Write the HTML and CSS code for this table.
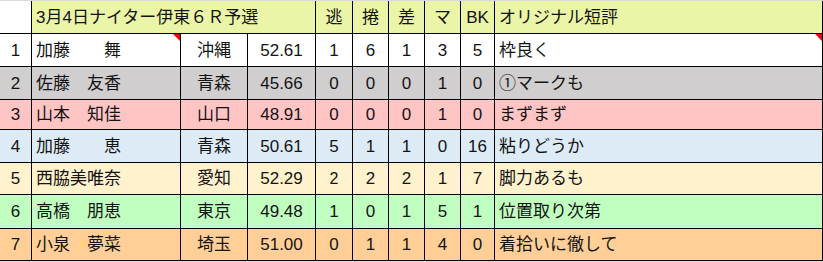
FILE: index.html
```html
<!DOCTYPE html>
<html lang="ja">
<head>
<meta charset="utf-8">
<title>3月4日ナイター伊東６Ｒ予選</title>
<link rel="stylesheet" href="styles.css">
</head>
<body>
<div class="sheet">
  <div class="row head">
    <div class="c idx"></div>
    <div class="c txt span3">3月4日ナイター伊東６Ｒ予選</div>
    <div class="c num">逃</div>
    <div class="c num">捲</div>
    <div class="c num">差</div>
    <div class="c num">マ</div>
    <div class="c num">BK</div>
    <div class="c txt">オリジナル短評</div>
  </div>
  <div class="row r1">
    <div class="c num">1</div>
    <div class="c txt note">加藤　　舞</div>
    <div class="c num">沖縄</div>
    <div class="c num">52.61</div>
    <div class="c num">1</div>
    <div class="c num">6</div>
    <div class="c num">1</div>
    <div class="c num">3</div>
    <div class="c num">5</div>
    <div class="c txt note">枠良く</div>
  </div>
  <div class="row r2">
    <div class="c num">2</div>
    <div class="c txt">佐藤　友香</div>
    <div class="c num">青森</div>
    <div class="c num">45.66</div>
    <div class="c num">0</div>
    <div class="c num">0</div>
    <div class="c num">0</div>
    <div class="c num">1</div>
    <div class="c num">0</div>
    <div class="c txt">①マークも</div>
  </div>
  <div class="row r3">
    <div class="c num">3</div>
    <div class="c txt">山本　知佳</div>
    <div class="c num">山口</div>
    <div class="c num">48.91</div>
    <div class="c num">0</div>
    <div class="c num">0</div>
    <div class="c num">0</div>
    <div class="c num">1</div>
    <div class="c num">0</div>
    <div class="c txt">まずまず</div>
  </div>
  <div class="row r4">
    <div class="c num">4</div>
    <div class="c txt">加藤　　恵</div>
    <div class="c num">青森</div>
    <div class="c num">50.61</div>
    <div class="c num">5</div>
    <div class="c num">1</div>
    <div class="c num">1</div>
    <div class="c num">0</div>
    <div class="c num">16</div>
    <div class="c txt">粘りどうか</div>
  </div>
  <div class="row r5">
    <div class="c num">5</div>
    <div class="c txt">西脇美唯奈</div>
    <div class="c num">愛知</div>
    <div class="c num">52.29</div>
    <div class="c num"><span class="alt">2</span></div>
    <div class="c num">2</div>
    <div class="c num">2</div>
    <div class="c num">1</div>
    <div class="c num">7</div>
    <div class="c txt">脚力あるも</div>
  </div>
  <div class="row r6">
    <div class="c num">6</div>
    <div class="c txt">高橋　朋恵</div>
    <div class="c num">東京</div>
    <div class="c num">49.48</div>
    <div class="c num">1</div>
    <div class="c num">0</div>
    <div class="c num">1</div>
    <div class="c num">5</div>
    <div class="c num">1</div>
    <div class="c txt">位置取り次第</div>
  </div>
  <div class="row r7">
    <div class="c num">7</div>
    <div class="c txt">小泉　夢菜</div>
    <div class="c num">埼玉</div>
    <div class="c num">51.00</div>
    <div class="c num">0</div>
    <div class="c num">1</div>
    <div class="c num">1</div>
    <div class="c num">4</div>
    <div class="c num">0</div>
    <div class="c txt">着拾いに徹して</div>
  </div>
</div>
</body>
</html>
```
FILE: styles.css
```css
html, body {
  margin: 0;
  padding: 0;
  background: #dadada;
}

body {
  padding-top: 1px;
  font-family: "Liberation Sans", "Noto Sans CJK JP", sans-serif;
  font-size: 17px;
  color: #141414;
}

.sheet {
  display: grid;
  grid-template-columns: 32px 149px 67px 68px 37px 36px 36px 36px 34px 328px;
  grid-template-rows: 33px 33px 33px 30px 33px 32px 34px 32px;
  width: 823px;
}

.row {
  display: contents;
}

.c {
  box-sizing: border-box;
  border-right: 1px solid #000;
  border-bottom: 1px solid #000;
  display: flex;
  align-items: center;
  white-space: pre;
  line-height: 1;
  position: relative;
  overflow: hidden;
}

.num {
  justify-content: center;
}

.txt {
  justify-content: flex-start;
  padding-left: 4px;
}

.span3 {
  grid-column: span 3;
}

.head > .c { background: #ebf5a8; }
.head > .idx { background: #fff; }
.r1 > .c { background: #ffffff; }
.r2 > .c { background: #d0cece; }
.r3 > .c { background: #ffc5c5; }
.r4 > .c { background: #ddebf7; }
.r5 > .c { background: #fff2cc; }
.r6 > .c { background: #c0ffc0; }
.r7 > .c { background: #ffcf97; }

.note::after {
  content: "";
  position: absolute;
  top: 0;
  right: 0;
  width: 0;
  height: 0;
  border-top: 7px solid #ff0000;
  border-left: 7px solid transparent;
}

.alt {
  font-size: 16px;
  padding-top: 1px;
}
```
